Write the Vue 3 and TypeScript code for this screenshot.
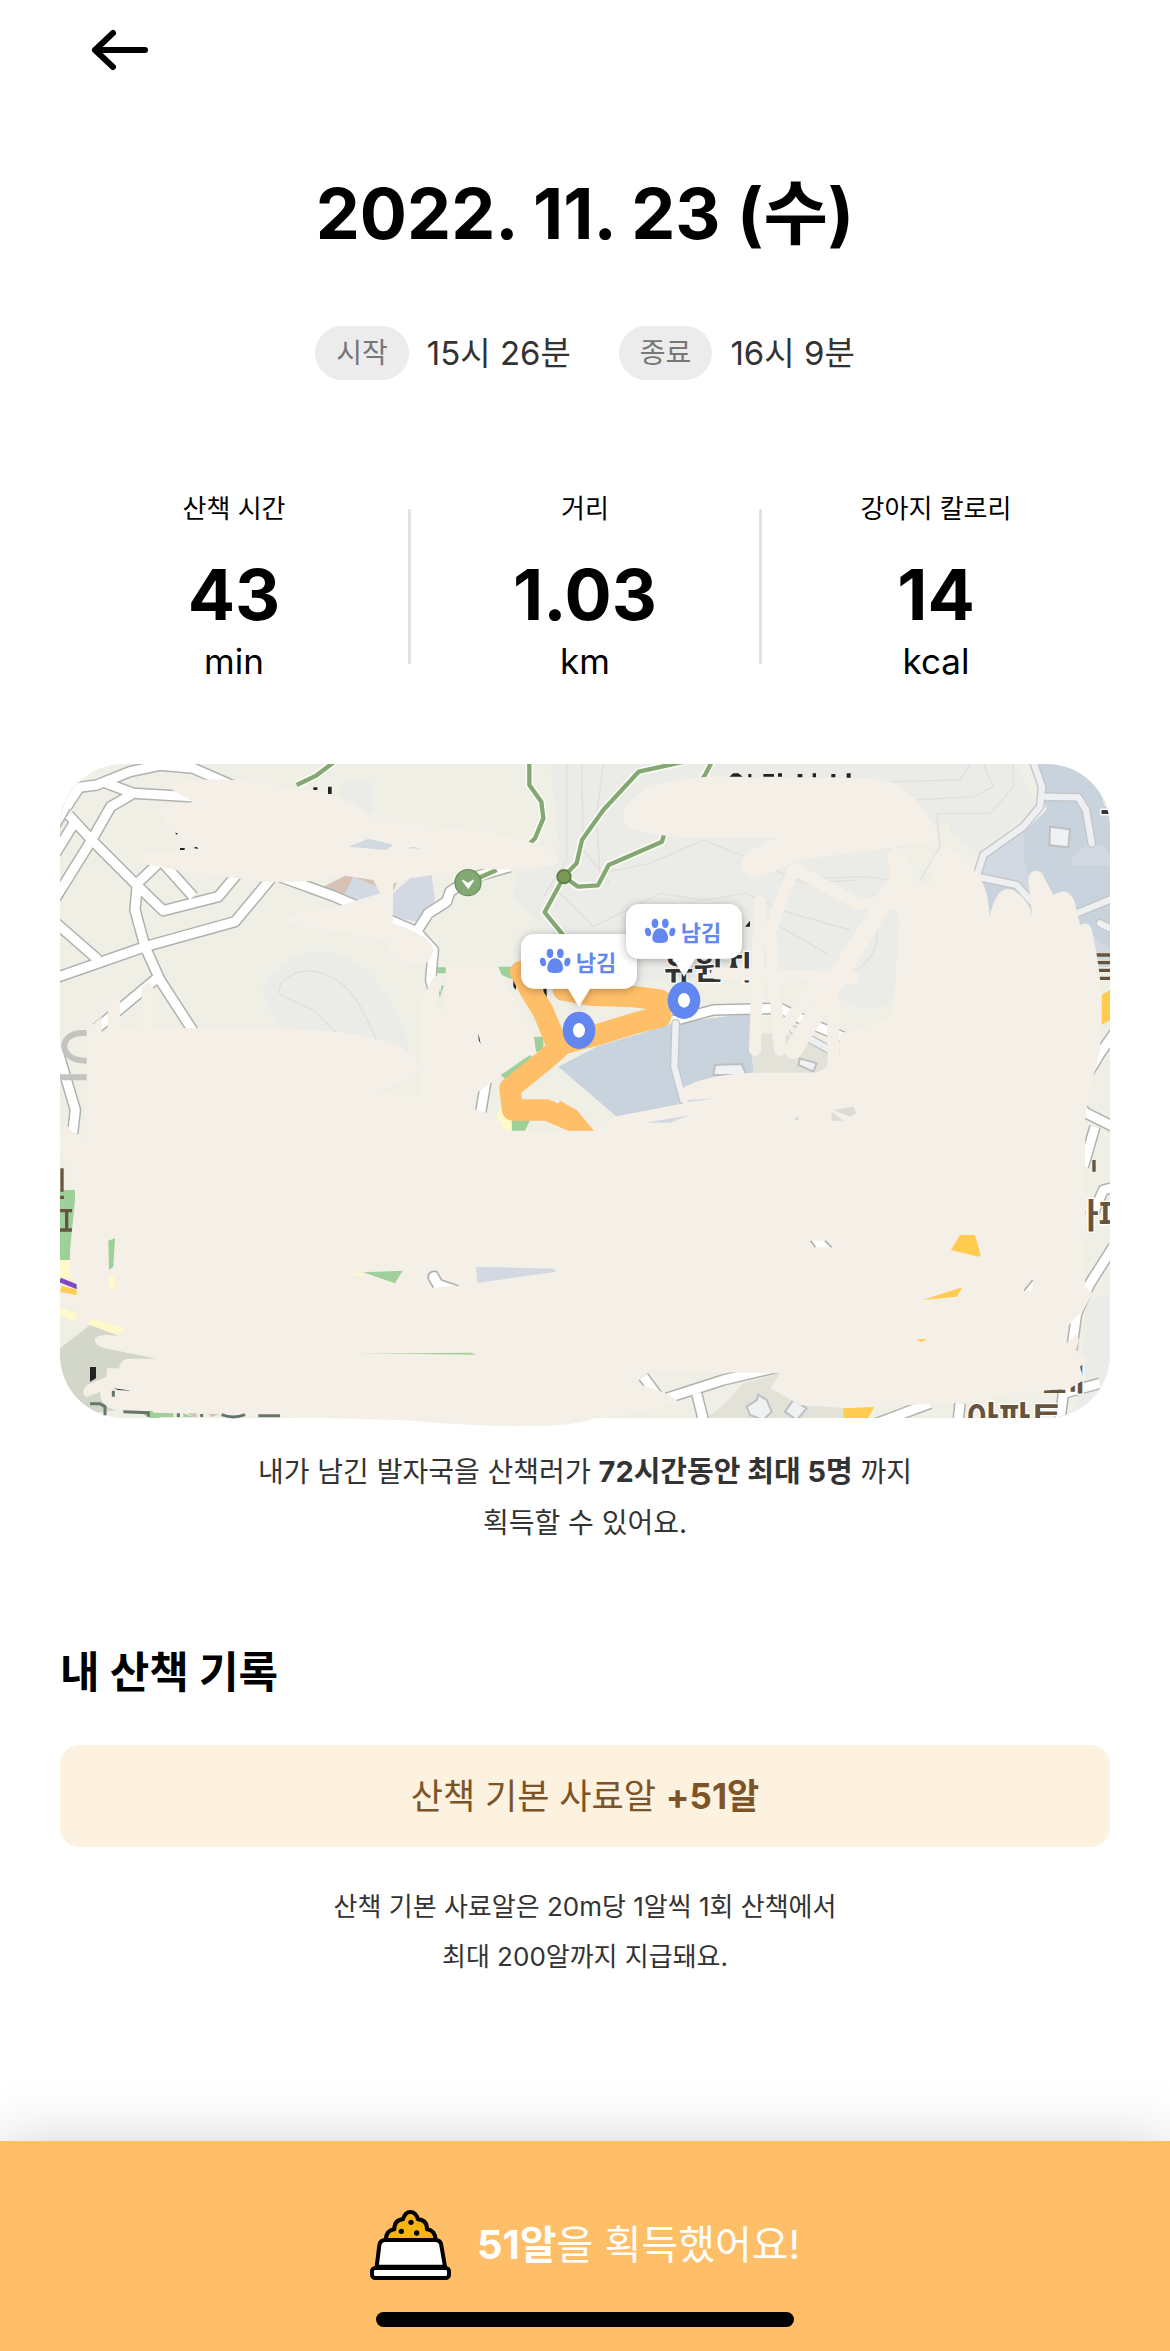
<script setup lang="ts">
interface Stat {
  label: string
  value: string
  unit: string
}

interface Pin {
  x: number
  y: number
  label: string
}

const times = [
  { label: '시작', value: '15시 26분' },
  { label: '종료', value: '16시 9분' },
]

const stats: Stat[] = [
  { label: '산책 시간', value: '43', unit: 'min' },
  { label: '거리', value: '1.03', unit: 'km' },
  { label: '강아지 칼로리', value: '14', unit: 'kcal' },
]

// Callout tips, in map units
const pins: Pin[] = [
  { x: 1587, y: 770, label: '남김' },
  { x: 1902, y: 680, label: '남김' },
]

const roads: string[] = [
  'M50 170L88 112L140 105L240 65L330 46L430 55L560 112',
  'M74 120L10 235',
  'M165 98L250 130L450 142',
  'M244 134L182 170L125 270L10 455',
  'M56 195L125 270L265 410L340 482L505 440L580 350',
  'M75 215L10 320',
  'M330 335L262 400L255 480L285 590L330 690L440 860',
  'M10 686L285 590L555 515L680 365',
  'M10 512L145 630',
  'M340 340L430 440',
  'M320 685L140 835',
  'M690 380L850 438L1100 545L1150 600L1142 690L1155 740',
  'M1100 545L1135 490L1190 455L1200 425L1260 385L1380 350',
  'M20 890L76 1080L68 1150',
  'M1860 815L1990 780L2190 775L2280 820L2400 870',
  'M3010 1000L3110 1090L3200 1135',
  'M3135 1130L3100 1250',
  'M3200 1310L3160 1320L3130 1390',
  'M3190 1490L3120 1600L3080 1690L3065 1800',
  'M1780 1880L1840 1960',
  'M1850 1945L2020 1890L2190 1850',
  'M1940 1930L1960 2010',
  'M2480 2020L2640 1960',
  'M2730 1960L2725 2010',
  'M3150 1900L3040 1930L3030 2010',
  'M3200 840L3150 910L3090 1010',
  'M1310 980L1285 1130',
]

const lanes: string[] = [
  'M2948 30L2976 110L2970 170L2920 230L2800 315L2780 380L2900 405L2950 460',
  'M2976 140L3085 142L3108 180L3125 280',
  'M3080 490L3190 445',
  'M3150 520L3190 540',
  'M1877 820L1873 950L1900 1050',
  'M2230 840L2340 900',
]

const contours: string[] = [
  'M1550 42V330L1480 440M1595 42L1600 300L1680 400',
  'M1660 42L1640 200L1650 370L1800 340L1960 270L2110 330L2260 400L2420 390',
  'M1500 400L1630 530L1830 430L1960 450L2090 430L2190 480L2400 540',
  'M2520 95L2730 90L2760 42M2590 150L2770 140L2830 110L2800 42',
  'M2660 190L2820 190L2890 110L2890 42M2660 190L2670 290L2610 390',
  'M2190 390L2440 380L2560 395M2190 530L2330 610M2480 540C2490 600 2450 640 2420 660',
]
</script>

<template>
  <div class="screen">
    <header class="topbar">
      <button class="back" type="button" aria-label="뒤로">
        <svg viewBox="0 0 60 44" width="60" height="44" aria-hidden="true">
          <path d="M55 22H5M23 5L5 22L23 39" />
        </svg>
      </button>
    </header>

    <main class="content">
      <h1 class="date">2022. 11. 23 (수)</h1>

      <div class="times">
        <div v-for="t in times" :key="t.label" class="time">
          <span class="chip">{{ t.label }}</span>
          <span>{{ t.value }}</span>
        </div>
      </div>

      <section class="stats">
        <template v-for="(s, i) in stats" :key="s.label">
          <div v-if="i > 0" class="divider"></div>
          <div class="stat">
            <span class="stat-label">{{ s.label }}</span>
            <strong class="stat-value">{{ s.value }}</strong>
            <span class="stat-unit">{{ s.unit }}</span>
          </div>
        </template>
      </section>

      <svg class="map" viewBox="30 42 3150 1962" role="img" aria-label="산책 경로 지도">
        <defs>
          <clipPath id="frame"><rect x="30" y="42" width="3150" height="1962" rx="190" /></clipPath>
          <filter id="lift" x="-20%" y="-20%" width="140%" height="150%">
            <feDropShadow dx="0" dy="4" stdDeviation="12" flood-color="#000" flood-opacity=".3" />
          </filter>
        </defs>

        <g clip-path="url(#frame)">
          <rect class="land" x="30" y="42" width="3150" height="1962" />

          <!-- hills -->
          <path class="hill" d="M1500 42H2900L2960 170L2780 310L2700 250L2700 220L2560 250L2550 720C2520 800 2400 790 2340 720L2190 680L1640 700L1540 580L1390 440L1400 380L1530 300Z" />
          <path class="hill" d="M680 660C740 590 850 590 920 640C1010 700 1090 850 1080 960L900 860C760 870 690 850 660 780C620 720 640 690 680 660ZM880 90L970 95V190H920L870 140Z" />
          <path class="contour" d="M870 860L790 780L700 740C660 720 720 650 800 665C900 690 930 760 980 870" />
          <path v-for="c in contours" :key="c" class="contour" :d="c" />

          <!-- districts -->
          <path class="water" d="M2950 42H3180V650H3110L2810 500L2780 380L2990 180Z" />
          <path class="mist" d="M2925 230L2920 320L2950 430L2810 390L2780 370L2800 310ZM3060 348C3070 290 3160 250 3180 320V345ZM3110 540L3180 600V650H3120Z" />
          <path class="tan" d="M820 410L930 355L1000 370L1040 400L1010 470L900 440Z" />
          <path class="mist" d="M880 440L910 380L1030 430L1080 385L1145 375L1155 450L1120 520L1030 500Z" />
          <path class="water" d="M1525 950L1640 890L1870 820L2100 790L2110 970L1900 1060L1700 1100Z" />
          <path class="park" d="M1157 652H1187V670H1160Z" />
          <path class="olive" d="M2110 850H2200L2400 900L2320 970H2110Z" />
          <path class="block" d="M1995 945L2075 942L2090 975H1990ZM2250 925L2300 940L2290 965L2245 945Z" />
          <path class="park" d="M30 1320H75V1530H30Z" />
          <path class="lemon" d="M30 1530H95V1585H30ZM30 1670L80 1690V1715L30 1695ZM125 1700L225 1735L210 1755L115 1730Z" />
          <path class="violet" d="M30 1590L85 1612" />
          <path class="amber" d="M35 1608L85 1620V1636L30 1625ZM3155 735L3180 720V810L3155 825ZM2390 1960H2480L2450 2010H2350Z" />
          <path class="moss" d="M30 1795L120 1725L200 1755L420 1840L200 1980L30 2004Z" />
          <path class="olive" d="M2020 1965L2080 1900L2190 1870L2380 1980V2004H1970Z" />
          <path class="hill" d="M3110 1640H3180V1990H3080Z" />

          <path v-for="r in roads" :key="r" class="casing" :d="r" />
          <path v-for="r in roads" :key="r" class="road" :d="r" />
          <path v-for="l in lanes" :key="l" class="lane-edge" :d="l" />
          <path v-for="l in lanes" :key="l" class="lane" :d="l" />
          <path class="block" d="M3000 230L3060 238L3055 292L2998 286Z" />
          <path class="block" d="M2100 1995L2090 1970L2120 1950L2125 1935L2150 1950L2165 1985L2140 2010ZM2205 1985L2230 1950L2270 1975L2240 2010Z" />

          <!-- trails -->
          <path class="trail-edge" d="M1438 30V105L1474 155L1480 205L1455 265L1410 310M1540 380L1580 340L1596 270L1660 180L1766 65L1900 36M1542 380L1584 410L1644 406L1676 345L1836 275L1850 225L1965 75L1985 36M1542 380L1484 487L1560 580M740 105L800 76L860 30M1250 400L1340 360" />
          <path class="trail" d="M1438 30V105L1474 155L1480 205L1455 265L1410 310M1540 380L1580 340L1596 270L1660 180L1766 65L1900 36M1542 380L1584 410L1644 406L1676 345L1836 275L1850 225L1965 75L1985 36M1542 380L1484 487L1560 580M740 105L800 76L860 30M1250 400L1340 360" />
          <circle class="junction" cx="1542" cy="380" r="20" />

          <!-- place names -->
          <g class="place">
            <text x="1842" y="688" font-size="96">유원지</text>
            <text x="3150" y="215" font-size="110">우</text>
          </g>
          <g class="place brown">
            <text x="2750" y="2044" font-size="104">아파트</text>
            <text x="3010" y="1920" font-size="104">대</text>
            <text x="3050" y="1434" font-size="104">아파</text>
          </g>
          <path class="stripe" d="M3130 615H3190M3130 638H3190M3130 661H3190M3130 685H3190M36 1255V1325M30 1342H42M30 1382H66M30 1440H66M50 1382V1440M3132 1230V1265M2982 1924H3046" />
          <path class="faded" d="M112 850C20 840 20 935 112 932M30 982H112" />
        </g>

        <!-- painted-over area -->
        <g class="cover">
          <path d="M350 110Q380 82 560 90L840 132Q960 170 960 215L1200 232Q1510 270 1525 330Q1525 365 1300 357L1150 372L1080 385L1030 400L1028 520Q1150 560 1150 600Q1140 660 1080 640Q1010 620 1015 570L700 520Q690 490 860 470L990 430L970 390L870 375Q810 400 640 395L410 365L270 340L290 305L400 305L440 290L370 250L320 180L430 155Z" />
          <path d="M1720 190C1740 120 1850 80 2000 80L2440 85C2570 90 2600 150 2640 210Q2700 280 2600 280L2480 300L2240 330L2140 380C2080 390 2050 340 2100 300L2180 264L1900 262C1750 250 1710 230 1720 190Z" />
          <path class="swipe wide" d="M2560 360L2400 620L2230 900M2540 320L2570 500" />
          <path class="swipe" d="M2130 455L2115 900M2230 360L2160 540L2190 900M2240 360L2420 460H2560M2000 670L2410 685M2190 850L2300 700M2350 760V950" />
          <path d="M110 1180V840L155 800V850L172 850L175 765Q190 740 210 740V832H275V715Q292 685 310 715V832L415 835Q650 825 900 850Q1120 890 1100 960Q1080 1000 960 1022L1113 1042V760L1145 690Q1160 670 1175 680L1160 780L1180 790L1190 650H1340L1370 700L1460 870Q1470 930 1430 930L1415 910L1380 960L1270 1035L1265 1075L1350 1100L1350 1142H1630L1690 1100L1900 1062L1890 1020Q1950 975 2110 968H2290Q2340 960 2340 920L2370 910V850L2450 830L2530 800L2545 560L2560 400L2620 395L2650 405Q2620 330 2680 295Q2740 300 2760 350Q2815 390 2819 500Q2840 400 2890 420Q2940 450 2947 500L2935 390Q2940 350 2975 368L3010 435Q3060 405 3075 460L3090 525Q3120 510 3127 545Q3150 650 3155 750L3150 900L3115 1040L3105 1110V1610L3128 1630L3100 1680L3050 1730V1780L3075 1755Q3090 1760 3085 1780L3070 1815L3120 1825L3090 1850L3102 1890L3060 1915L2900 1930L2770 1955L2390 1975L2250 1965L2162 1915L2190 1870L1790 1863L1730 1895Q1850 1920 1885 1955L1760 1990L1635 2005Q1530 2050 1050 2010L780 2003L200 1980Q150 1970 150 1925L110 1942Q90 1930 110 1905L170 1880V1855H207Q210 1825 240 1826H320L180 1798Q130 1790 135 1765Q145 1750 200 1757L225 1735L125 1705L115 1725Q95 1750 80 1725V1672H30V1636H80V1600L60 1570V1500L77 1330L65 1260Q32 1240 30 1160L50 1125L78 1160Z" />
        </g>

        <!-- gaps in the painted area -->
        <g>
          <path class="park" d="M175 1472L195 1465L190 1550L177 1560ZM940 1567L1058 1562L1035 1600ZM920 1811L1260 1808L1280 1814L1100 1812ZM265 1985L305 1982L330 2004H300ZM1345 650H1392V690L1355 675ZM1452 860H1480V905H1458ZM1352 975L1440 915L1470 940L1380 1000ZM1385 1090H1450L1425 1142H1385ZM1175 705L1182 708L1168 745Z" />
          <path class="lemon" d="M177 1578H194V1620H177ZM890 1568H940V1581ZM1345 1080L1385 1100V1142H1365L1340 1100Z" />
          <path class="mist" d="M1278 1550L1510 1556L1520 1565L1282 1599ZM1785 1118L1920 1095L1860 1118ZM1910 1050L2000 1045L1915 1056ZM895 290L955 266L1030 284L1010 300ZM1070 295L1090 290L1112 296Z" />
          <path class="bump" d="M1150 1613L1134 1585Q1135 1560 1160 1565L1175 1590L1225 1607" />
          <path class="amber" d="M2730 1455H2775L2792 1515L2785 1520L2703 1500ZM2617 1650L2737 1612L2720 1640ZM2600 1767H2630L2614 1777Z" />
          <path class="stone" d="M2350 1080L2410 1070L2420 1090L2400 1100ZM2345 1112V1085L2380 1112ZM2230 1108L2245 1098V1112Z" />
          <path class="gap" d="M2285 1472H2325L2345 1492H2300ZM2925 1622L2948 1592V1622Z" />
          <path class="gap-edge" d="M2282 1472L2296 1492M2325 1472L2345 1492M2922 1622L2948 1590" />
          <path class="ink" d="M120 1851H138V1885L120 1895ZM190 1915L245 1922L205 1920ZM790 112H802V120H790ZM834 110H845V132H834ZM390 294H404V300H390ZM430 294L440 290L445 297ZM375 248L384 250L380 254ZM1285 850L1292 882L1286 870ZM1480 715H1490V745H1480ZM1390 680L1398 690V720L1390 710Z" />
          <path class="ink" d="M2038 80L2050 70H2065L2078 80ZM2095 72H2104V82H2095ZM2140 72H2172V80H2140ZM2184 70H2196V80H2184ZM2243 72H2257V82H2243ZM2288 70H2298V82H2288ZM2344 72H2356V82H2344ZM2390 70H2402V83H2390ZM2085 530L2100 512V530Z" />
          <path class="roofs" d="M120 1961H150L165 1970V1996M220 1985L295 1988V2000M385 1990V2001M455 1992V2001M515 1994Q550 2008 585 1994M625 1997H690M190 1940V1922" />
          <path class="park" d="M310 1988L370 1990V2001H310ZM400 1990L430 2001H400Z" />
          <path class="tan" d="M412 1990H440V2001H430ZM475 1992H510L485 2001Z" />
        </g>

        <!-- walked route -->
        <path class="route" d="M1412 665L1440 720L1480 785L1525 895L1485 930L1380 1015L1388 1080L1490 1080L1560 1110" />
        <path class="route" d="M1540 720L1620 735L1750 740L1830 750L1832 800L1760 818L1640 855L1525 885" />
        <path class="route-end" d="M1510 1085L1555 1142H1632L1580 1080L1530 1052Z" />

        <g class="badge">
          <circle cx="1254" cy="398" r="39" />
          <path d="M1237 390L1254 401L1271 390L1255 414Z" />
        </g>

        <g v-for="p in pins" :key="p.x">
          <g filter="url(#lift)" fill="#fff">
            <rect :x="p.x - 174" :y="p.y - 218" width="348" height="164" rx="40" />
            <path :d="`M${p.x - 34} ${p.y - 56}H${p.x + 34}L${p.x} ${p.y}Z`" />
          </g>
          <g class="paw" :transform="`translate(${p.x - 118} ${p.y - 174})`">
            <ellipse cx="10" cy="40" rx="9" ry="13" transform="rotate(-12 10 40)" />
            <ellipse cx="31" cy="14" rx="10" ry="14" />
            <ellipse cx="62" cy="14" rx="10" ry="14" />
            <ellipse cx="83" cy="40" rx="9" ry="13" transform="rotate(12 83 40)" />
            <path d="M46 29C64 29 70 48 70 58C70 70 62 73 46 73S23 70 23 58C23 48 29 29 46 29Z" />
          </g>
          <text class="pin-label" :x="p.x - 10" :y="p.y - 106">{{ p.label }}</text>
          <ellipse class="dot" :cx="p.x" :cy="p.y + 71" rx="49" ry="56" />
          <ellipse class="dot-core" :cx="p.x" :cy="p.y + 71" rx="18" ry="22" />
        </g>
      </svg>

      <p class="hint">
        내가 남긴 발자국을 산책러가 <strong>72시간동안 최대 5명</strong> 까지<br />획득할 수 있어요.
      </p>

      <h2 class="section-title">내 산책 기록</h2>
      <div class="reward">
        <span>산책 기본 사료알 <strong>+51알</strong></span>
      </div>
      <p class="note">
        산책 기본 사료알은 20m당 1알씩 1회 산책에서<br />최대 200알까지 지급돼요.
      </p>
    </main>

    <footer class="result">
      <div class="result-row">
        <svg viewBox="0 0 243 210" width="81" height="70" aria-hidden="true">
          <path class="food" d="M47 90C48 70 56 60 73 58C73 38 82 29 99 28C103 13 110 6 121 6S140 14 144 28C162 29 171 40 171 58C188 60 196 72 197 90Z" />
          <path class="bowl" d="M20 170L28 106Q30 90 46 90H196Q212 90 214 106L225 170Z" />
          <rect class="bowl" x="6" y="174" width="231" height="30" rx="10" />
          <circle cx="123" cy="37" r="8" />
          <circle cx="94" cy="64" r="8" />
          <circle cx="140" cy="69" r="8" />
        </svg>
        <p class="result-text"><strong>51알</strong>을 획득했어요!</p>
      </div>
      <div class="home-bar"></div>
    </footer>
  </div>
</template>

<style>
body {
  background: #fff;
}
</style>

<style scoped>
.screen {
  display: flex;
  flex-direction: column;
  min-height: 100vh;
  background: #fff;
  color: #000;
  font-family: Inter, 'Noto Sans CJK KR', sans-serif;
}
h1,
h2,
p {
  margin: 0;
}
.topbar {
  display: flex;
  align-items: center;
  height: 100px;
  padding: 0 90px;
}
.back {
  display: flex;
  padding: 0;
  border: 0;
  background: none;
}
.back path {
  fill: none;
  stroke: #000;
  stroke-width: 6;
  stroke-linecap: round;
  stroke-linejoin: round;
}
.content {
  padding: 74px 60px 80px;
}
.date {
  font-size: 70px;
  line-height: 80px;
  font-weight: 700;
  text-align: center;
}
.times {
  display: flex;
  justify-content: center;
  gap: 48px;
  margin-top: 72px;
}
.time {
  display: flex;
  align-items: center;
  gap: 18px;
  color: #333;
  font-size: 33px;
  line-height: 54px;
}
.chip {
  padding: 0 21px;
  border-radius: 27px;
  background: #ececec;
  color: #777;
  font-size: 28px;
}
.stats {
  display: flex;
  align-items: center;
  margin-top: 109px;
}
.stat {
  display: flex;
  flex: 1;
  flex-direction: column;
  align-items: center;
}
.divider {
  width: 3px;
  height: 155px;
  background: #e3e3e3;
}
.stat-label {
  font-size: 26px;
  line-height: 40px;
}
.stat-value {
  margin-top: 26px;
  font-size: 70px;
  line-height: 80px;
}
.stat-unit {
  margin-top: 4px;
  font-size: 35px;
  line-height: 44px;
}
.map {
  display: block;
  width: 100%;
  margin-top: 81px;
  overflow: visible;
}
.land { fill: #efefe6; }
.hill { fill: #ebece8; }
.water { fill: #c9d3dd; }
.mist { fill: #d2d9e2; }
.tan { fill: #d6c3b5; }
.park { fill: #a0d09a; }
.lemon { fill: #fff8c8; }
.amber { fill: #ffcc4f; }
.moss { fill: #d3d7c9; }
.olive { fill: #e2e2d9; }
.stone { fill: #dcdcd4; }
.ink { fill: #222; }
.block {
  fill: #eff1f2;
  stroke: #bcc0c2;
  stroke-width: 6;
}
.violet {
  stroke: #8048c0;
  stroke-width: 14;
}
.contour {
  fill: none;
  stroke: #dfe0db;
  stroke-width: 4;
}
.casing,
.road,
.lane-edge,
.lane,
.trail,
.trail-edge {
  fill: none;
  stroke-linejoin: round;
}
.casing {
  stroke: #b1b1af;
  stroke-width: 36;
}
.road {
  stroke: #fff;
  stroke-width: 27;
}
.lane-edge {
  stroke: #c3c6c9;
  stroke-width: 27;
  stroke-linecap: round;
}
.lane {
  stroke: #eeeff0;
  stroke-width: 19;
  stroke-linecap: round;
}
.trail-edge {
  stroke: #fafaf7;
  stroke-width: 23;
}
.trail {
  stroke: #83a871;
  stroke-width: 13;
}
.junction {
  fill: #7b9954;
  stroke: #5c8047;
  stroke-width: 6;
}
.place {
  fill: #333;
  stroke: #fff;
  stroke-width: 8;
  paint-order: stroke;
  font-weight: 700;
}
.place.brown {
  fill: #66543f;
}
.stripe {
  fill: none;
  stroke: #66543f;
  stroke-width: 10;
}
.faded {
  fill: none;
  stroke: #c4c3bf;
  stroke-width: 18;
}
.cover {
  fill: #f4efe7;
}
.swipe {
  fill: none;
  stroke: #f4efe7;
  stroke-width: 36;
  stroke-linecap: round;
  stroke-linejoin: round;
}
.swipe.wide {
  stroke-width: 54;
}
.bump {
  fill: #fff;
  stroke: #b1b1af;
  stroke-width: 5;
}
.gap {
  fill: #fff;
}
.gap-edge {
  stroke: #b1b1af;
  stroke-width: 5;
}
.roofs {
  fill: none;
  stroke: #65766a;
  stroke-width: 9;
}
.route {
  fill: none;
  stroke: #ffbe68;
  stroke-width: 64;
  stroke-linecap: round;
  stroke-linejoin: round;
}
.route-end {
  fill: #ffbe68;
}
.badge circle {
  fill: #83a871;
  stroke: #68905a;
  stroke-width: 4;
}
.badge path {
  fill: #fff;
  stroke: #fff;
  stroke-width: 4;
}
.paw,
.pin-label,
.dot {
  fill: #6387f0;
}
.pin-label {
  font-size: 66px;
  font-weight: 700;
}
.dot-core {
  fill: #fff;
}
.hint {
  margin-top: 28px;
  color: #333;
  font-size: 28px;
  line-height: 51px;
  text-align: center;
}
.hint strong {
  font-size: 29px;
}
.section-title {
  margin-top: 93px;
  font-size: 43px;
  line-height: 60px;
  font-weight: 700;
}
.reward {
  margin-top: 43px;
  border-radius: 20px;
  background: #fdf1df;
  color: #7c5427;
  font-size: 35px;
  line-height: 102px;
  text-align: center;
}
.note {
  margin-top: 35px;
  color: #333;
  font-size: 26px;
  line-height: 50px;
  text-align: center;
}
.result {
  display: flex;
  flex-direction: column;
  align-items: center;
  margin-top: auto;
  padding: 69px 60px 24px;
  background: #ffbe68;
  box-shadow: 0 0 60px rgba(0, 0, 0, 0.17);
}
.result-row {
  display: flex;
  align-items: center;
  gap: 26px;
}
.result-row svg {
  display: block;
}
.food,
.bowl {
  stroke: #000;
  stroke-width: 12;
  stroke-linejoin: round;
}
.food {
  fill: #f5b410;
}
.bowl {
  fill: #fff;
}
.result-text {
  color: #fff;
  font-size: 40px;
  line-height: 70px;
}
.home-bar {
  width: 418px;
  height: 15px;
  margin-top: 32px;
  border-radius: 8px;
  background: #000;
}
</style>
